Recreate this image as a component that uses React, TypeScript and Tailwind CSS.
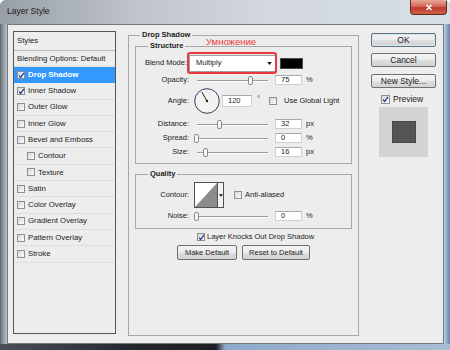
import clsx from "clsx";

const styleRows = [
  { name: "Drop Shadow", on: true, sel: true },
  { name: "Inner Shadow", on: true },
  { name: "Outer Glow" },
  { name: "Inner Glow" },
  { name: "Bevel and Emboss" },
  { name: "Contour", sub: true },
  { name: "Texture", sub: true },
  { name: "Satin" },
  { name: "Color Overlay" },
  { name: "Gradient Overlay" },
  { name: "Pattern Overlay" },
  { name: "Stroke" },
];

function Check({ on, className }: { on?: boolean; className?: string }) {
  return (
    <span
      className={clsx(
        "relative inline-flex h-[8px] w-[8px] shrink-0 items-center justify-center border border-[#8e8f8f] bg-[linear-gradient(135deg,#d8d8d8,#fbfbfb)]",
        className
      )}
    >
      {on && (
        <svg viewBox="0 0 8 8" className="absolute left-[0px] top-[0px] h-[7px] w-[7px]">
          <path d="M1.2 4.2 L3.1 6.3 L6.8 0.9" fill="none" stroke="#24378f" strokeWidth="1.5" />
        </svg>
      )}
    </span>
  );
}

function Slider({ at }: { at: number }) {
  return (
    <div className="relative ml-[8px] h-[9px] w-[71px] shrink-0">
      <div className="absolute left-0 right-0 top-[4px] h-[2px] border-t border-[#9a9a9a] bg-white" />
      <div
        className="absolute top-0 h-[9px] w-[5px] rounded-[2px] border border-[#8a8a8a] bg-[#f7f7f7]"
        style={{ left: at }}
      />
    </div>
  );
}

function Field({ v, className }: { v: string; className?: string }) {
  return (
    <div
      className={clsx(
        "flex h-[10px] shrink-0 items-center border border-[#d0d0d0] border-t-[#a9a9a9] bg-white pl-[5px] leading-none",
        className ?? "ml-[7px] w-[27px]"
      )}
    >
      {v}
    </div>
  );
}

function Row({ label, className, children }: { label: string; className?: string; children: React.ReactNode }) {
  return (
    <div className={clsx("flex h-[14px] items-center", className)}>
      <span className="w-[53px] shrink-0 text-right">{label}</span>
      {children}
    </div>
  );
}

function Btn({ children, className }: { children: React.ReactNode; className?: string }) {
  return (
    <button
      className={clsx(
        "flex shrink-0 items-center justify-center rounded-[2px] border border-[#707070] bg-[linear-gradient(#f4f4f4_0%,#ececec_50%,#dedede_51%,#d2d2d2_100%)] leading-none text-[#1c1c1c]",
        className
      )}
    >
      {children}
    </button>
  );
}

export default function App() {
  return (
    <div className="flex h-[350px] w-[450px] flex-col overflow-hidden rounded-t-[6px] bg-[#9fa8b1] font-[Liberation_Sans,Arial,sans-serif] text-[7.5px] text-[#1c1c1c]">
      {/* title bar */}
      <div className="flex h-[24px] shrink-0 items-start justify-between bg-[linear-gradient(90deg,#979ea5_0%,#bfc5cb_30%,#d2d8dd_60%,#d6dee7_100%)] pl-[7px]">
        <span className="mt-[5px] text-[8.5px] leading-[12px] text-[#1a1a1a]">Layer Style</span>
        <div className="mr-[3px] flex h-[15px] w-[37px] items-center justify-center rounded-b-[4px] border border-t-0 border-[#5e2a22] bg-[linear-gradient(#e8a899_0%,#d46a5a_45%,#c0392b_55%,#d0614c_100%)]">
          <svg viewBox="0 0 10 10" className="h-[7px] w-[8px]">
            <path d="M1.5 1.5 L8.5 8.5 M8.5 1.5 L1.5 8.5" stroke="#fff" strokeWidth="2" />
          </svg>
        </div>
      </div>

      <div className="flex min-h-0 flex-1">
        <div className="w-[7px] shrink-0 bg-[linear-gradient(90deg,#5d646b_0%,#8d959c_40%,#b9c0c6_100%)]" />

        {/* client area */}
        <div className="flex flex-1 items-start border border-[#6f7a85] bg-[#ededed] pl-[5px] pt-[6px]">
          {/* styles list */}
          <div className="flex h-[303px] w-[103px] shrink-0 flex-col border border-[#555555] text-[7.8px]">
            <div className="flex h-[19px] shrink-0 items-center border-b border-[#b9b9b9] pl-[3px]">Styles</div>
            <div className="flex h-[16px] shrink-0 items-center border-b border-[#dedede] pl-[3px]">
              Blending Options: Default
            </div>
            {styleRows.map((s) => (
              <div
                key={s.name}
                className={clsx(
                  "flex h-[16.3px] shrink-0 items-center gap-[3px] border-b",
                  s.sel ? "border-[#3399ff] bg-[#3399ff] font-bold text-white" : "border-[#dedede]",
                  s.sub ? "pl-[13px]" : "pl-[3px]"
                )}
              >
                <Check on={s.on} className={s.sel ? "bg-white" : undefined} />
                <span>{s.name}</span>
              </div>
            ))}
          </div>

          {/* drop shadow panel */}
          <fieldset className="ml-[12px] h-[305px] w-[231px] shrink-0 border border-[#a7a7a7] px-[6px]">
            <legend className="ml-[5px] px-[2px] font-bold leading-[8px]">Drop Shadow</legend>

            <fieldset className="mt-[3px] border border-[#a7a7a7] pb-[4px]">
              <legend className="ml-[12px] px-[2px] font-bold leading-[8px]">Structure</legend>

              <div className="mt-[4px] flex h-[18px] items-center">
                <span className="w-[51px] shrink-0 text-right">Blend Mode:</span>
                <div className="relative ml-[2px] flex h-[17px] w-[87px] shrink-0 items-center justify-between border border-[#a0a0a0] bg-white pl-[6px] pr-[3px]">
                  <span>Multiply</span>
                  <svg viewBox="0 0 6 4" className="h-[3px] w-[5px]">
                    <path d="M0 0 L6 0 L3 4 Z" fill="#111" />
                  </svg>
                  <div className="pointer-events-none absolute -bottom-[3px] -left-[3px] -right-[2px] -top-[4px] rounded-[3px] border-2 border-[#e8383c]" />
                  <span className="absolute -top-[20px] left-[16px] whitespace-nowrap text-[9.5px] leading-[11px] text-[#e8383c]">
                    Умножение
                  </span>
                </div>
                <div className="ml-[4px] h-[11px] w-[23px] shrink-0 border border-[#4a4a4a] bg-black" />
              </div>

              <Row label="Opacity:" className="mt-[1px]">
                <Slider at={51} />
                <Field v="75" />
                <span className="ml-[4px]">%</span>
              </Row>

              <div className="mt-[1px] flex h-[26px] items-center">
                <span className="w-[53px] shrink-0 text-right">Angle:</span>
                <svg viewBox="0 0 26 26" className="ml-[5px] h-[26px] w-[26px] shrink-0">
                  <circle cx="13" cy="13" r="12.3" fill="#f3f3f3" stroke="#33405f" strokeWidth="1" />
                  <path d="M13 13 L7.8 4" stroke="#222" strokeWidth="1" />
                  <circle cx="13" cy="13" r="1.2" fill="#222" />
                </svg>
                <Field v="120" className="ml-[2px] h-[12px] w-[30px]" />
                <span className="ml-[5px] -mt-[4px]">°</span>
                <Check className="ml-[9px]" />
                <span className="ml-[7px]">Use Global Light</span>
              </div>

              <Row label="Distance:" className="mt-[3px]">
                <Slider at={20} />
                <Field v="32" />
                <span className="ml-[4px]">px</span>
              </Row>
              <Row label="Spread:">
                <Slider at={-3} />
                <Field v="0" />
                <span className="ml-[4px]">%</span>
              </Row>
              <Row label="Size:">
                <Slider at={6} />
                <Field v="16" />
                <span className="ml-[4px]">px</span>
              </Row>
            </fieldset>

            <fieldset className="mt-[6px] border border-[#a7a7a7] pb-[5px]">
              <legend className="ml-[12px] px-[2px] font-bold leading-[8px]">Quality</legend>

              <div className="mt-[4px] flex h-[26px] items-center">
                <span className="w-[53px] shrink-0 text-right">Contour:</span>
                <div className="ml-[5px] flex h-[26px] w-[30px] shrink-0 border border-[#505050] bg-white">
                  <svg viewBox="0 0 22 24" preserveAspectRatio="none" className="h-full w-[22px]">
                    <path d="M0 24 L22 0 L22 24 Z" fill="#8c8c8c" />
                  </svg>
                  <div className="flex flex-1 items-center justify-center border-l border-[#505050] bg-[#f2f2f2]">
                    <svg viewBox="0 0 6 4" className="h-[3px] w-[4px]">
                      <path d="M0 0 L6 0 L3 4 Z" fill="#111" />
                    </svg>
                  </div>
                </div>
                <Check className="ml-[10px]" />
                <span className="ml-[3px]">Anti-aliased</span>
              </div>

              <Row label="Noise:" className="mt-[1px]">
                <Slider at={-3} />
                <Field v="0" />
                <span className="ml-[4px]">%</span>
              </Row>
            </fieldset>

            <div className="mt-[3px] flex h-[10px] items-center pl-[62px]">
              <Check on />
              <span className="ml-[2px]">Layer Knocks Out Drop Shadow</span>
            </div>

            <div className="mt-[3px] flex justify-center gap-[5px]">
              <Btn className="h-[15px] w-[60px]">Make Default</Btn>
              <Btn className="h-[15px] w-[68px]">Reset to Default</Btn>
            </div>
          </fieldset>

          {/* right column */}
          <div className="ml-[12px] flex w-[65px] shrink-0 flex-col text-[8.5px]">
            <Btn className="mt-[2px] h-[14px] w-[65px] border-[#3c7fb1] bg-[linear-gradient(#eaf6fd_0%,#d9f0fc_50%,#bee6fd_51%,#a7d9f5_100%)] shadow-[inset_0_0_0_1px_#c6ecfb]">
              OK
            </Btn>
            <Btn className="mt-[6px] h-[14px] w-[65px]">Cancel</Btn>
            <Btn className="mt-[7px] h-[14px] w-[65px]">New Style...</Btn>
            <div className="mt-[7px] flex h-[9px] items-center pl-[10px]">
              <Check on className="h-[9px] w-[9px]" />
              <span className="ml-[3px]">Preview</span>
            </div>
            <div className="ml-[8px] mt-[3px] flex h-[50px] w-[49px] items-center justify-center bg-[#d3d3d3]">
              <div className="h-[22px] w-[24px] border border-[#4a4a4a] bg-[#555555]" />
            </div>
          </div>
        </div>

        <div className="w-[6px] shrink-0 bg-[linear-gradient(90deg,#c4d2e1_0%,#89a7cb_50%,#5e84b4_100%)]" />
      </div>

      <div className="h-[6px] shrink-0 bg-[linear-gradient(90deg,#4a5058_0%,#23272c_30%,#1c1f23_48%,#8ea9c9_50%,#a8bdd5_100%)]" />
    </div>
  );
}
